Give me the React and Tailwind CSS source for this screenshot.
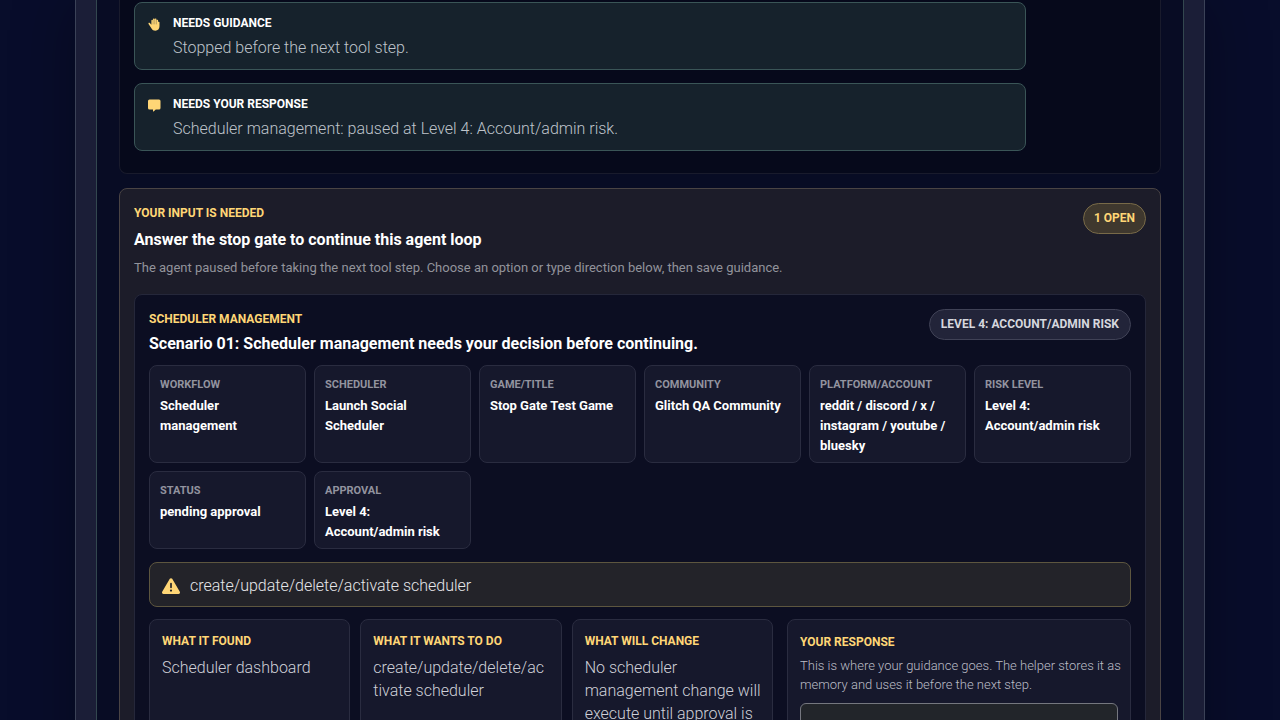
import React, { useState } from "react";
import { FaTriangleExclamation } from "react-icons/fa6";

const HandIcon = ({ className }) => (
  <svg viewBox="2 1 24 25" fill="currentColor" className={className} aria-hidden="true">
    <path d="M8 6.2a1.6 1.6 0 0 1 3.2 0V4a1.6 1.6 0 0 1 3.3-.6A1.6 1.6 0 0 1 17.7 4v1.8a1.6 1.6 0 0 1 3.3.4v2.6a1.5 1.5 0 0 1 2.6.9V17c0 5-3 8.4-7.9 8.4-3.6 0-5.7-1.3-7.4-4.2l-5.7-8.8c-.9-1.5 1-3 2.4-1.7L8 13.8z" />
    <path
      d="M11.3 6v6.500M14.500 4v8.500M17.800 6v6.500"
      stroke="#16222c"
      strokeWidth="0.5"
      strokeLinecap="round"
    />
  </svg>
);

const MessageIcon = ({ className }) => (
  <svg viewBox="0 0 26 26" fill="currentColor" className={className} aria-hidden="true">
    <path d="M3 1.2h19a3 3 0 0 1 3 3V18a3 3 0 0 1-3 3h-6.5l-4.3 3.8c-.6.5-1.2.2-1.2-.5V21H3a3 3 0 0 1-3-3V4.200a3 3 0 0 1 3-3z" />
  </svg>
);

const notices = [
  {
    key: "guidance",
    icon: HandIcon,
    title: "Needs guidance",
    text: "Stopped before the next tool step.",
  },
  {
    key: "response",
    icon: MessageIcon,
    title: "Needs your response",
    text: "Scheduler management: paused at Level 4: Account/admin risk.",
  },
];

const details = [
  { label: "Workflow", value: "Scheduler management" },
  { label: "Scheduler", value: "Launch Social Scheduler" },
  { label: "Game/Title", value: "Stop Gate Test Game" },
  { label: "Community", value: "Glitch QA Community" },
  {
    label: "Platform/Account",
    value: "reddit / discord / x / instagram / youtube / bluesky",
  },
  { label: "Risk level", value: "Level 4: Account/admin risk" },
  { label: "Status", value: "pending approval" },
  { label: "Approval", value: "Level 4: Account/admin risk" },
];

const findings = [
  {
    label: "What it found",
    value: "Scheduler dashboard",
    padding: "px-3",
  },
  {
    label: "What it wants to do",
    value: "create/update/delete/activate scheduler",
    padding: "px-3",
  },
  {
    label: "What will change",
    value: "No scheduler management change will execute until approval is",
    padding: "pl-3 pr-2",
  },
];

const Notice = ({ icon: Icon, title, text }) => (
  <li className="flex gap-3 rounded-lg border border-[#3a5557] bg-[#16222c] pt-3 pr-3 pb-[9px] pl-[13px]">
    <Icon className="mt-[3px] size-[13px] shrink-0 text-[#ffd676]" />
    <div>
      <h3 className="text-xs leading-4 font-bold text-white uppercase">
        {title}
      </h3>
      <p className="mt-[5px] text-base leading-6 font-light text-[#bfc4cb]">
        {text}
      </p>
    </div>
  </li>
);

const Detail = ({ label, value }) => (
  <div className="rounded-lg border border-[#2a2c40] bg-[#16182c] px-2.5 pt-[11px] pb-1.5">
    <dt className="text-[11px] leading-4 font-bold text-[#92939f] uppercase">
      {label}
    </dt>
    <dd className="mt-[3px] text-[13px] leading-5 font-bold text-white">
      {value}
    </dd>
  </div>
);

const Finding = ({ label, value, padding }) => (
  <div
    className={`rounded-lg border border-[#2a2c40] bg-[#16182c] pt-[13px] pb-3 ${padding}`}
  >
    <h4 className="text-xs leading-4 font-bold text-[#ffd676] uppercase">
      {label}
    </h4>
    <p className="mt-[7px] text-base leading-[23px] font-light wrap-anywhere text-[#cfd0d8]">
      {value}
    </p>
  </div>
);

const App = () => {
  const [response, setResponse] = useState("");

  return (
    <div className="h-screen overflow-hidden bg-[#080d2b] px-[75px] font-[Roboto,sans-serif]">
      <div className="min-h-full border-x border-[#3b4257] bg-[#1b1e37] px-5 shadow-[0_0_60px_rgba(0,0,0,0.3)]">
        <main className="min-h-screen border-x border-[#33474f] bg-[#080c24] px-[22px]">
          {/* Notices */}
          <section className="rounded-b-lg border border-t-0 border-[#191b2c] bg-[#06091b] px-3.5 pt-0.5 pb-[22px]">
            <ul className="flex max-w-[892px] flex-col gap-[13px]">
              {notices.map((item) => (
                <Notice
                  key={item.key}
                  icon={item.icon}
                  title={item.title}
                  text={item.text}
                />
              ))}
            </ul>
          </section>

          {/* Stop gate */}
          <section className="mt-3.5 rounded-lg border border-[#4a4444] bg-[#1c1c29] p-3.5">
            <header className="flex items-start justify-between gap-4">
              <div>
                <p className="text-xs leading-5 font-bold text-[#ffd676] uppercase">
                  Your input is needed
                </p>
                <h2 className="mt-1 text-base leading-[26px] font-bold text-white">
                  Answer the stop gate to continue this agent loop
                </h2>
                <p className="mt-1 text-[13px] leading-[21px] text-[#92939b]">
                  The agent paused before taking the next tool step. Choose an
                  option or type direction below, then save guidance.
                </p>
              </div>
              <span className="rounded-full border border-[#786a48] bg-[#3f382e] px-2.5 py-1 text-xs leading-[21px] font-bold whitespace-nowrap text-[#ffd676] uppercase">
                1 open
              </span>
            </header>

            <article className="mt-4 rounded-lg border border-[#25273a] bg-[#0c0e22] p-3.5">
              <header className="flex items-start justify-between gap-4">
                <div>
                  <p className="text-xs leading-5 font-bold text-[#ffd676] uppercase">
                    Scheduler management
                  </p>
                  <h3 className="mt-0.5 text-base leading-[26px] font-bold text-white">
                    Scenario 01: Scheduler management needs your decision before
                    continuing.
                  </h3>
                </div>
                <span className="rounded-full border border-[#404256] bg-[#222439] px-[11px] py-1 text-xs leading-[21px] font-bold whitespace-nowrap text-[#d6d7de] uppercase">
                  Level 4: Account/admin risk
                </span>
              </header>

              <dl className="mt-2 grid grid-cols-6 gap-2">
                {details.map((item) => (
                  <Detail
                    key={item.label}
                    label={item.label}
                    value={item.value}
                  />
                ))}
              </dl>

              {/* Requested action */}
              <div className="mt-[13px] flex items-center gap-2.5 rounded-lg border border-[#5d563f] bg-[#232329] px-3 pt-[11px] pb-[9px]">
                <FaTriangleExclamation className="size-[18px] shrink-0 text-[#ffd676]" />
                <p className="text-base leading-[23px] font-light text-[#e6e6e9]">
                  create/update/delete/activate scheduler
                </p>
              </div>

              <div className="mt-3 grid grid-cols-[minmax(0,1fr)_344px] gap-3.5">
                <div className="grid grid-cols-3 gap-2.5">
                  {findings.map((item) => (
                    <Finding
                      key={item.label}
                      label={item.label}
                      value={item.value}
                      padding={item.padding}
                    />
                  ))}
                </div>

                {/* Response */}
                <form className="rounded-lg border border-[#2a2c40] bg-[#16182c] p-3">
                  <label
                    htmlFor="response"
                    className="block text-xs leading-5 font-bold text-[#ffd676] uppercase"
                  >
                    Your response
                  </label>
                  <p
                    id="response-help"
                    className="mt-1 -mr-2 text-[13px] leading-[19px] font-light text-[#bcbdc7]"
                  >
                    This is where your guidance goes. The helper stores it as
                    memory and uses it before the next step.
                  </p>
                  <textarea
                    id="response"
                    aria-describedby="response-help"
                    rows={4}
                    value={response}
                    onChange={(e) => setResponse(e.target.value)}
                    className="mt-[9px] block w-full rounded-md border border-[#75777f] bg-[#22252a] p-3 text-base text-white"
                  />
                </form>
              </div>
            </article>
          </section>
        </main>
      </div>
    </div>
  );
};

export default App;
